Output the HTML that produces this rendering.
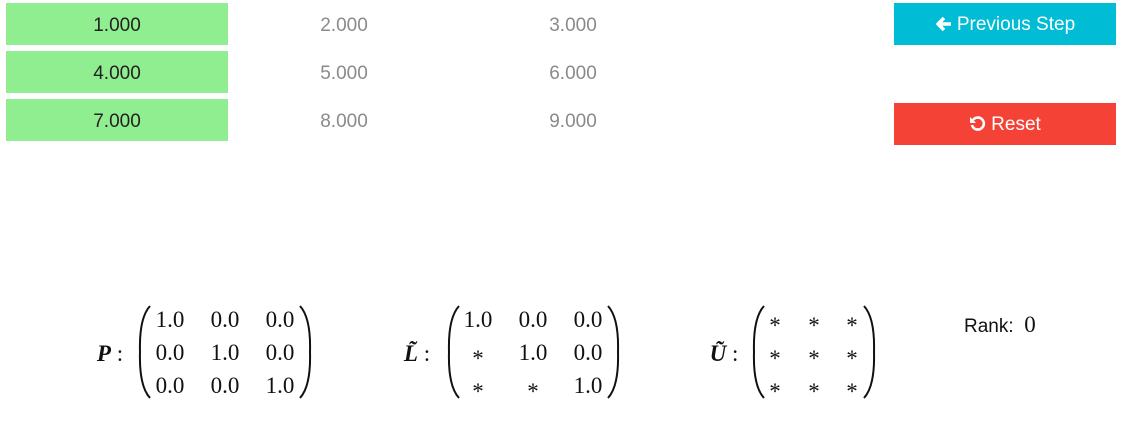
<!DOCTYPE html>
<html><head><style>
body{margin:0;width:1134px;height:425px;background:#fff;position:relative;overflow:hidden;font-family:"Liberation Sans",sans-serif}
.c{position:absolute;width:222px;height:42px;line-height:45px;text-align:center;font-size:19px}
.g{background:#90ee90;color:#222}
.t{color:#8a8a8a}
.btn{position:absolute;left:894px;width:222px;height:42px;line-height:44px;color:#fff;text-align:center;font-size:19px}
.m{position:absolute;font-family:"Liberation Serif",serif;font-size:23px;color:#111;transform:translate(-50%,-50%);white-space:nowrap}
.s{font-size:23px}
</style></head><body>
<div class="c g" style="left:6px;top:3px">1.000</div>
<div class="c t" style="left:233px;top:3px">2.000</div>
<div class="c t" style="left:462px;top:3px">3.000</div>
<div class="c g" style="left:6px;top:51px">4.000</div>
<div class="c t" style="left:233px;top:51px">5.000</div>
<div class="c t" style="left:462px;top:51px">6.000</div>
<div class="c g" style="left:6px;top:99px">7.000</div>
<div class="c t" style="left:233px;top:99px">8.000</div>
<div class="c t" style="left:462px;top:99px">9.000</div>
<div class="btn" style="top:3px;background:#00bcd4"><svg width="18" height="16" viewBox="0 0 18 16" style="vertical-align:-2px;margin-right:4px"><path d="M9 2L3 8l6 6M3 8h13" stroke="#fff" stroke-width="3.5" fill="none" stroke-linejoin="round"/></svg>Previous Step</div>
<div class="btn" style="top:103px;background:#f44336"><svg width="18" height="18" viewBox="0 0 18 18" style="vertical-align:-3px;margin-right:4px"><path d="M4 5A6 6 0 1 1 3 10" stroke="#fff" stroke-width="2.6" fill="none"/><path d="M1 2v6h6z" fill="#fff"/></svg>Reset</div>
<svg width="1134" height="425" style="position:absolute;left:0;top:0">
<g stroke="#111" stroke-width="2" fill="none">
<path d="M150 306Q139 318 140 352Q139 386 150 398"/>
<path d="M300 306Q311 318 310 352Q311 386 300 398"/>
<path d="M459 306Q448 318 449 352Q448 386 459 398"/>
<path d="M608 306Q619 318 618 352Q619 386 608 398"/>
<path d="M764 306Q753 318 754 352Q753 386 764 398"/>
<path d="M864 306Q875 318 874 352Q875 386 864 398"/>
</g></svg>
<div class="m" style="left:110px;top:354px"><b><i>P</i></b>&nbsp;:</div>
<div class="m" style="left:417px;top:354px"><b><i>L̃</i></b>&nbsp;:</div>
<div class="m" style="left:724px;top:354px"><b><i>Ũ</i></b>&nbsp;:</div>
<div class="m" style="left:170px;top:320px">1.0</div><div class="m" style="left:225px;top:320px">0.0</div><div class="m" style="left:280px;top:320px">0.0</div>
<div class="m" style="left:170px;top:353px">0.0</div><div class="m" style="left:225px;top:353px">1.0</div><div class="m" style="left:280px;top:353px">0.0</div>
<div class="m" style="left:170px;top:386px">0.0</div><div class="m" style="left:225px;top:386px">0.0</div><div class="m" style="left:280px;top:386px">1.0</div>
<div class="m" style="left:478px;top:320px">1.0</div><div class="m" style="left:533px;top:320px">0.0</div><div class="m" style="left:588px;top:320px">0.0</div>
<div class="m s" style="left:478px;top:359px">*</div><div class="m" style="left:533px;top:353px">1.0</div><div class="m" style="left:588px;top:353px">0.0</div>
<div class="m s" style="left:478px;top:392px">*</div><div class="m s" style="left:533px;top:392px">*</div><div class="m" style="left:588px;top:386px">1.0</div>
<div class="m s" style="left:775px;top:326px">*</div><div class="m s" style="left:814px;top:326px">*</div><div class="m s" style="left:852px;top:326px">*</div>
<div class="m s" style="left:775px;top:359px">*</div><div class="m s" style="left:814px;top:359px">*</div><div class="m s" style="left:852px;top:359px">*</div>
<div class="m s" style="left:775px;top:392px">*</div><div class="m s" style="left:814px;top:392px">*</div><div class="m s" style="left:852px;top:392px">*</div>
<div style="position:absolute;left:964px;top:312px;font-size:19px;color:#111">Rank:&nbsp; <span style="font-family:'Liberation Serif',serif;font-size:23px">0</span></div>
</body></html>
